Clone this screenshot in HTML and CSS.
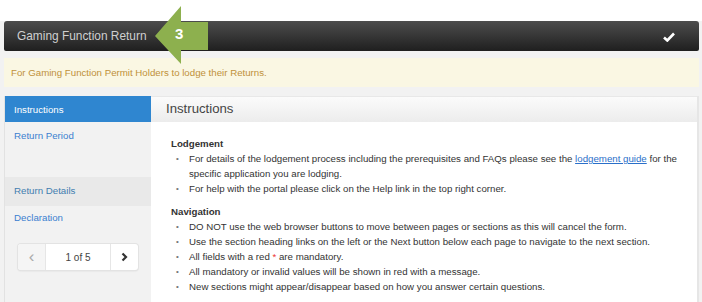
FILE: index.html
```html
<!DOCTYPE html>
<html>
  <head>
    <meta charset="UTF-8" />
    <title>Gaming Function Return</title>
    <link rel="stylesheet" href="styles.css">
  </head>
  <body>
    <div class="page">
      <div class="titlebar">
        <span class="title">Gaming Function Return</span>
        <svg class="check" width="12" height="10" viewBox="0 0 12 10">
          <path d="M1 5.5 L4.3 8.5 L11 1.5" fill="none" stroke="#fff" stroke-width="2.6" />
        </svg>
        <div class="callout">
          <svg width="54" height="58" viewBox="0 0 54 58">
            <polygon points="0,30 26,0 26,16 53,16 53,44 26,44 26,58" fill="#8db04e" />
          </svg>
          <span class="callout-num">3</span>
        </div>
      </div>

      <div class="notice">For Gaming Function Permit Holders to lodge their Returns.</div>

      <div class="layout">
        <div class="sidenav">
          <a class="nav-item active">Instructions</a>
          <a class="nav-item tall">Return Period</a>
          <a class="nav-item shaded">Return Details</a>
          <a class="nav-item">Declaration</a>

          <div class="pager">
            <span class="pager-btn prev">&#8249;</span>
            <span class="pager-count">1 of 5</span>
            <span class="pager-btn next">
              <svg width="7" height="10" viewBox="0 0 7 10">
                <path d="M1.5 1.5 L5 5 L1.5 8.5" fill="none" stroke="#333" stroke-width="2.2" />
              </svg>
            </span>
          </div>
        </div>

        <div class="panel">
          <div class="panel-head">Instructions</div>
          <div class="panel-body">
            <h4>Lodgement</h4>
            <ul>
              <li>For details of the lodgement process including the prerequisites and FAQs please see the <a href="#">lodgement guide</a> for the<br>specific application you are lodging.</li>
              <li>For help with the portal please click on the Help link in the top right corner.</li>
            </ul>
            <h4>Navigation</h4>
            <ul>
              <li>DO NOT use the web browser buttons to move between pages or sections as this will cancel the form.</li>
              <li>Use the section heading links on the left or the Next button below each page to navigate to the next section.</li>
              <li>All fields with a red <span class="req">*</span> are mandatory.</li>
              <li>All mandatory or invalid values will be shown in red with a message.</li>
              <li>New sections might appear/disappear based on how you answer certain questions.</li>
            </ul>
          </div>
        </div>
      </div>
    </div>
  </body>
</html>
```

FILE: styles.css
```css
* {
  box-sizing: border-box;
}

html,
body {
  margin: 0;
  height: 100%;
}

body {
  font-family: "Liberation Sans", Arial, sans-serif;
  font-size: 9.7px;
  color: #333;
  background: #fff;
  padding-top: 21px;
  overflow: hidden;
}

.page {
  background: #f2f2f2;
  height: 100%;
  padding: 0 3px 0 4px;
}

.titlebar {
  position: relative;
  height: 30px;
  display: flex;
  align-items: center;
  justify-content: space-between;
  padding: 0 24px 0 13px;
  background: linear-gradient(#4d4d4d, #1f1f1f);
  border-radius: 3px 3px 2px 2px;
}

.title {
  color: #d0d0d0;
  font-size: 11.9px;
}

.check {
  margin-top: 1px;
}

.callout {
  position: absolute;
  left: 151px;
  top: -15px;
  width: 54px;
  height: 58px;
}

.callout svg {
  display: block;
}

.callout-num {
  position: absolute;
  left: 20px;
  top: 19px;
  color: #fff;
  font-weight: bold;
  font-size: 15px;
}

.notice {
  margin-top: 7px;
  height: 29px;
  display: flex;
  align-items: center;
  padding-left: 7px;
  background: #faf7e3;
  color: #c0913a;
  font-size: 9.7px;
}

.layout {
  margin-top: 9px;
  display: grid;
  grid-template-columns: 147px 1fr;
  height: 220px;
}

.sidenav {
  display: flex;
  flex-direction: column;
  background: #f2f2f2;
  border-left: 1px solid #e2e2e2;
}

.nav-item {
  display: block;
  padding: 7px 9px;
  height: 26px;
  color: #3b7fd0;
  font-size: 9.7px;
}

.nav-item.active {
  background: #2f86d0;
  color: #fff;
  padding-top: 8px;
}

.nav-item.tall {
  height: 55px;
  padding-top: 8px;
}

.nav-item.shaded {
  background: #e9e9e9;
  color: #427eb0;
  height: 29px;
  padding-top: 8px;
}

.nav-item:last-of-type {
  height: 27px;
  padding-top: 6px;
}

.pager {
  margin: 11px 0 0 13px;
  width: 120px;
  height: 26px;
  display: flex;
  border-radius: 3px;
  box-shadow: 0 0 0 1px #e3e3e3, 0 1px 2px rgba(0, 0, 0, 0.12);
  background: #fff;
  overflow: hidden;
}

.pager-btn {
  width: 28px;
  display: flex;
  align-items: center;
  justify-content: center;
}

.prev {
  background: #f5f5f5;
  color: #aaa;
  font-size: 17px;
  border-right: 1px solid #e6e6e6;
}

.next {
  border-left: 1px solid #e6e6e6;
}

.pager-count {
  flex: 1;
  display: flex;
  align-items: center;
  justify-content: center;
  font-size: 10px;
  color: #444;
}

.panel {
  background: #fff;
  border-right: 2px solid #e6e6e6;
}

.panel-head {
  height: 26px;
  padding: 4px 15px;
  font-size: 13.2px;
  color: #444;
  background: linear-gradient(#fbfbfb, #ececec);
  border-top: 1px solid #e8e8e8;
}

.panel-body {
  padding: 14px 20px 0 20px;
}

h4 {
  margin: 0;
  font-size: 9.7px;
  font-weight: bold;
  color: #333;
  line-height: 15px;
}

ul {
  margin: 0 0 8px 0;
  padding-left: 18px;
  list-style: none;
  line-height: 15px;
}

li {
  position: relative;
}

li::before {
  content: "\2022";
  position: absolute;
  left: -13px;
  color: #777;
  font-size: 8px;
}

a {
  color: #2a6fc9;
}

.req {
  color: #e33;
}
```
